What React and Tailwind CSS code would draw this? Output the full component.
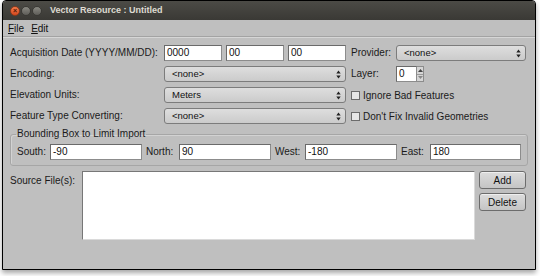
import React from "react";

const font = { fontFamily: '"Liberation Sans", Arial, sans-serif' };

function Arrows() {
  return (
    <svg width="5" height="9" viewBox="0 0 5 9" className="shrink-0">
      <path d="M2.5 0.5 L4.7 3.5 L0.3 3.5 Z" fill="#222" />
      <path d="M2.5 8.5 L4.7 5.5 L0.3 5.5 Z" fill="#222" />
    </svg>
  );
}

function Select({ value, w }) {
  return (
    <div
      className={`${w} h-[16px] shrink-0 flex items-center justify-between pl-[7px] pr-[4px] rounded-[3px] border border-[#7c7c7c] bg-gradient-to-b from-[#dedede] to-[#cbcbcb] text-[9.5px] text-[#111]`}
    >
      <span className="leading-none">{value}</span>
      <Arrows />
    </div>
  );
}

function Input({ value, w }) {
  return (
    <div
      className={`${w} h-[16px] shrink-0 flex items-center pl-[2px] bg-white border border-[#8c8c8c] border-t-[#6a6a6a] border-l-[#6a6a6a] text-[10px] text-[#111] leading-none`}
    >
      {value}
    </div>
  );
}

function Check({ label }) {
  return (
    <div className="flex items-center gap-[3px]">
      <div className="w-[9px] h-[9px] border border-[#6b6b6b] bg-[#e6e6e6]" />
      <span className="text-[10px] text-[#1a1a1a]">{label}</span>
    </div>
  );
}

function Label({ children, w }) {
  return (
    <div className={`${w} shrink-0 text-[10px] text-[#1a1a1a] leading-none`}>
      {children}
    </div>
  );
}

function Button({ children }) {
  return (
    <div className="w-[47px] h-[18px] flex items-center justify-center rounded-[3px] border border-[#6c6c6c] bg-gradient-to-b from-[#dcdcdc] to-[#c4c4c4] text-[10px] text-[#111] shadow-[inset_0_1px_0_#efefef]">
      {children}
    </div>
  );
}

export default function App() {
  return (
    <div className="w-[540px] h-[276px] bg-white pl-[2px]" style={font}>
      <div className="w-[534px] h-[270px] border border-black rounded-t-[4px] overflow-hidden bg-[#bfbfbf] flex flex-col shadow-[0_3px_5px_rgba(0,0,0,0.35)]">
        {/* Title bar */}
        <div className="h-[19px] shrink-0 flex items-center bg-gradient-to-b from-[#4c4b46] to-[#3a3935] pl-[7px]">
          <div className="flex items-center gap-[1px]">
            <div className="w-[10px] h-[10px] rounded-full bg-gradient-to-b from-[#f47a4a] to-[#d6481e] border border-[#8a3a1c] flex items-center justify-center">
              <span className="text-[7px] leading-none text-[#4a1a08] font-bold">×</span>
            </div>
            <div className="w-[10px] h-[10px] rounded-full bg-gradient-to-b from-[#8a8983] to-[#5e5d58] border border-[#3a3935]" />
            <div className="w-[10px] h-[10px] rounded-full bg-gradient-to-b from-[#8a8983] to-[#5e5d58] border border-[#3a3935]" />
          </div>
          <div className="ml-[8px] text-[9px] font-bold text-[#dfdbd2]">
            Vector Resource : Untitled
          </div>
        </div>
        {/* Menu bar */}
        <div className="h-[17px] shrink-0 flex items-center gap-[7px] pl-[5px] text-[10px] text-[#111] border-b border-[#a3a3a3] shadow-[0_1px_0_#d6d6d6]">
          <span>
            <span className="underline">F</span>ile
          </span>
          <span>
            <span className="underline">E</span>dit
          </span>
        </div>
        {/* Form */}
        <div className="flex flex-col pl-[7px] pr-[7px] pt-[8px]">
          <div className="flex items-center h-[16px]">
            <Label w="w-[154px]">Acquisition Date (YYYY/MM/DD):</Label>
            <Input value="0000" w="w-[58px]" />
            <div className="w-[4px]" />
            <Input value="00" w="w-[58px]" />
            <div className="w-[4px]" />
            <Input value="00" w="w-[58px]" />
            <div className="w-[5px]" />
            <Label w="w-[45px]">Provider:</Label>
            <Select value="<none>" w="w-[130px]" />
          </div>
          <div className="flex items-center h-[16px] mt-[5px]">
            <Label w="w-[154px]">Encoding:</Label>
            <Select value="<none>" w="w-[182px]" />
            <div className="w-[5px]" />
            <Label w="w-[45px]">Layer:</Label>
            <div className="flex h-[16px]">
              <div className="w-[21px] h-[16px] bg-white border border-[#8c8c8c] border-t-[#6a6a6a] border-l-[#6a6a6a] flex items-center pl-[2px] text-[10px] leading-none text-[#111]">
                0
              </div>
              <div className="w-[7px] h-[16px] flex flex-col border border-l-0 border-[#8c8c8c] bg-[#d6d6d6]">
                <div className="flex-1 flex items-center justify-center border-b border-[#9a9a9a]">
                  <svg width="5" height="3" viewBox="0 0 5 3">
                    <path d="M2.5 0 L5 3 L0 3 Z" fill="#444" />
                  </svg>
                </div>
                <div className="flex-1 flex items-center justify-center">
                  <svg width="5" height="3" viewBox="0 0 5 3">
                    <path d="M2.5 3 L5 0 L0 0 Z" fill="#888" />
                  </svg>
                </div>
              </div>
            </div>
          </div>
          <div className="flex items-center h-[16px] mt-[5px]">
            <Label w="w-[154px]">Elevation Units:</Label>
            <Select value="Meters" w="w-[182px]" />
            <div className="w-[5px]" />
            <Check label="Ignore Bad Features" />
          </div>
          <div className="flex items-center h-[16px] mt-[5px]">
            <Label w="w-[154px]">Feature Type Converting:</Label>
            <Select value="<none>" w="w-[182px]" />
            <div className="w-[5px]" />
            <Check label="Don't Fix Invalid Geometries" />
          </div>
          {/* Group box */}
          <fieldset className="mt-[4px] w-[517px] border border-[#a6a6a6] rounded-[3px] px-[6px] pb-[5px] pt-[0px] shadow-[inset_1px_1px_0_#d2d2d2]">
            <legend className="px-[1px] ml-[-1px] text-[10px] text-[#1a1a1a] leading-[12px]">
              Bounding Box to Limit Import
            </legend>
            <div className="flex items-center h-[16px] mt-[4px]">
              <Label w="w-[33px]">South:</Label>
              <Input value="-90" w="w-[92px]" />
              <div className="w-[4px]" />
              <Label w="w-[33px]">North:</Label>
              <Input value="90" w="w-[92px]" />
              <div className="w-[4px]" />
              <Label w="w-[30px]">West:</Label>
              <Input value="-180" w="w-[92px]" />
              <div className="w-[4px]" />
              <Label w="w-[29px]">East:</Label>
              <Input value="180" w="w-[91px]" />
            </div>
          </fieldset>
          {/* Source files */}
          <div className="flex mt-[5px]">
            <div className="w-[72px] shrink-0 pt-[5px] text-[10px] text-[#1a1a1a] leading-none">
              Source File(s):
            </div>
            <div className="w-[393px] h-[69px] bg-white border border-[#dadada] border-t-[#777] border-l-[#777]" />
            <div className="flex flex-col gap-[4px] ml-[4px]">
              <Button>Add</Button>
              <Button>Delete</Button>
            </div>
          </div>
        </div>
      </div>
    </div>
  );
}
